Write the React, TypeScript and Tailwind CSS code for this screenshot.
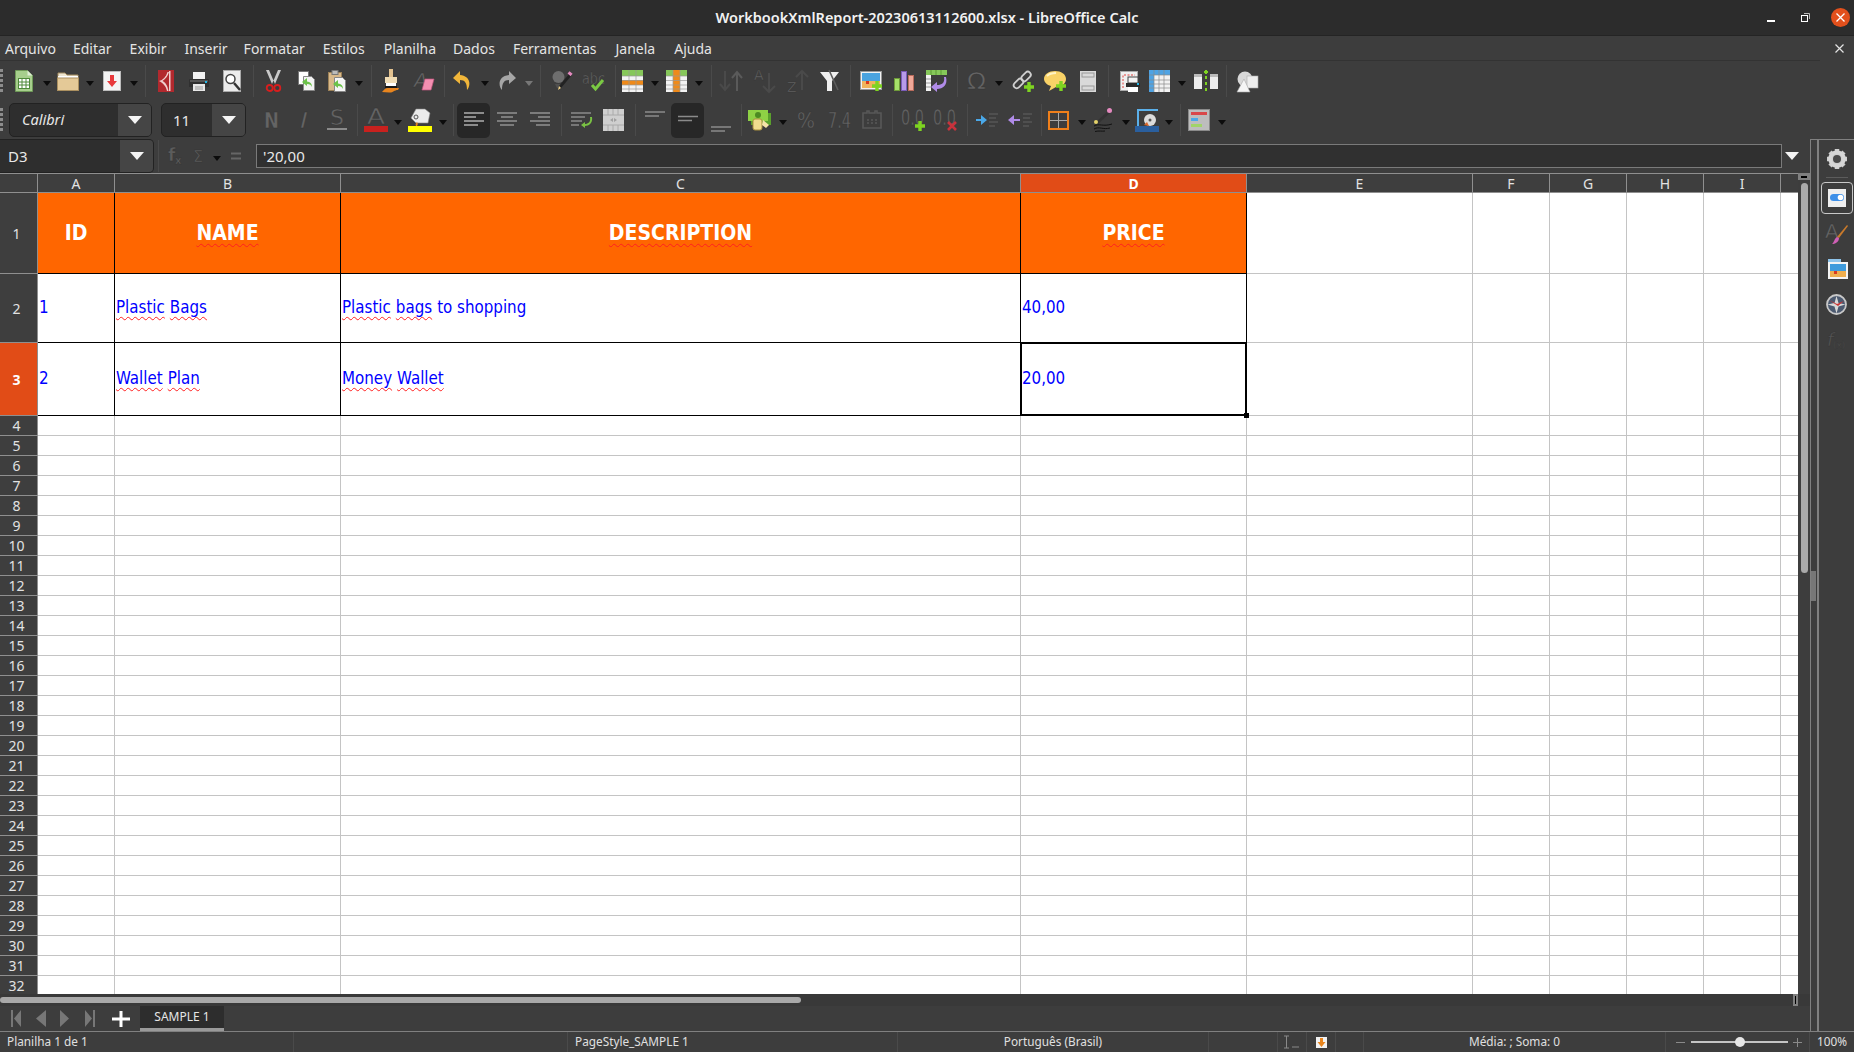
import type { ReactNode } from "react";

type IconProps = { className?: string };

const Svg = ({ w, h, className = "", children }: { w: number; h: number; className?: string; children: ReactNode }) => (
    <svg width={w} height={h} viewBox={`0 0 ${w} ${h}`} className={`shrink-0 overflow-visible ${className}`}>
        {children}
    </svg>
);

const Label = ({ x, y, size, fill = "#646464", weight, style, len, children }: { x: number; y: number; size: number; fill?: string; weight?: string; style?: string; len?: number; children: ReactNode }) => (
    <text
        x={x}
        y={y}
        fontSize={size}
        fill={fill}
        stroke="#333333"
        strokeWidth=".4"
        fontWeight={weight}
        fontStyle={style}
        fontFamily="'DejaVu Sans', sans-serif"
        textLength={len}
        lengthAdjust={len ? "spacingAndGlyphs" : undefined}
    >
        {children}
    </text>
);

const Plus = ({ x, y, s = 10 }: { x: number; y: number; s?: number }) => (
    <path d={`M${x + s / 2} ${y}v${s}M${x} ${y + s / 2}h${s}`} stroke="#7ed321" strokeWidth="3.4" />
);

/* ── small toolbar bits ── */
const Caret = ({ className = "", dim = false }: IconProps & { dim?: boolean }) => (
    <Svg w={8} h={5} className={`mt-1 ${className}`}>
        <path d="M0 0h8L4 5z" fill={dim ? "#777" : "#0c0c0c"} />
    </Svg>
);
const Sep = ({ className = "" }: IconProps) => <div className={`h-8 w-px shrink-0 bg-[#4a4a4a] ${className}`} />;
const Grip = () => (
    <Svg w={3} h={24}>
        {[0, 5, 10, 15, 20].map((y) => (
            <rect key={y} x="0" y={y} width="3" height="3" fill="#8d8d8d" />
        ))}
    </Svg>
);
const WhiteTriangle = () => (
    <Svg w={14} h={8}>
        <path d="M0 0h14L7 8z" fill="#f4f4f4" />
    </Svg>
);

/* ── toolbar 1 ── */
const NewDoc = ({ className }: IconProps) => (
    <Svg w={18} h={22} className={className}>
        <path d="M.5.5h12l5 5v16H.5z" fill="#a7cf8d" stroke="#6f9a58" />
        <path d="M12.5.5v5h5z" fill="#e0eed6" />
        <rect x="3.5" y="8.5" width="11" height="10" fill="#fff" stroke="#4f8a3b" />
        <path d="M3.5 12h11M3.5 15h11M7 8.5v10M11 8.5v10" stroke="#4f8a3b" />
    </Svg>
);
const Folder = ({ className }: IconProps) => (
    <Svg w={22} h={20} className={className}>
        <path d="M1 2h7l2 2h11v4H1z" fill="#efe6d2" stroke="#a68e63" />
        <rect x="1" y="5" width="20" height="2" fill="#fff" />
        <rect x=".5" y="7" width="21" height="12.5" fill="#e4c997" stroke="#ab9060" />
    </Svg>
);
const SaveIcon = ({ className }: IconProps) => (
    <Svg w={18} h={20} className={className}>
        <rect x=".5" y=".5" width="17" height="19" fill="#f4f4f4" stroke="#bdbdbd" />
        <path d="M7 4h4v6h3l-5 6-5-6h3z" fill="#e8393c" />
    </Svg>
);
const PdfIcon = ({ className }: IconProps) => (
    <Svg w={16} h={22} className={className}>
        <rect width="16" height="22" fill="#b2292e" />
        <path d="M11 1v20h1.500V1zM9.500 2C8 7 5 10 1 11c4 2 7 5 8 10h1.500C9.500 15 7 12 4.500 11c3-2 5.500-5 6.500-9z" fill="#f0cfcf" />
    </Svg>
);
const PrintIcon = ({ className }: IconProps) => (
    <Svg w={20} h={20} className={className}>
        <rect x="4" y="1" width="12" height="7" fill="#f2f2f2" />
        <path d="M1 8h18a1 1 0 0 1 1 1v7H0V9a1 1 0 0 1 1-1z" fill="#303030" />
        <rect x="1" y="9" width="18" height="2" fill="#555" />
        <rect x="16" y="10" width="2" height="2" fill="#22b8e8" />
        <rect x="4" y="13" width="12" height="7" fill="#e8e8e8" />
        <path d="M6 16h8M6 18h8" stroke="#999" />
    </Svg>
);
const PreviewIcon = ({ className }: IconProps) => (
    <Svg w={18} h={22} className={className}>
        <rect x=".5" y=".5" width="17" height="21" fill="#ececec" stroke="#aaa" />
        <circle cx="7.500" cy="9" r="4.500" fill="#fff" stroke="#444" strokeWidth="1.500" />
        <path d="M11 13l6 7" stroke="#333" strokeWidth="2.500" />
    </Svg>
);
const CutIcon = ({ className }: IconProps) => (
    <Svg w={15} h={22} className={className}>
        <path d="M0 0l6 14h3L3 0zM15 0L9 14H6l6-14z" fill="#c9c9c9" />
        <circle cx="3.700" cy="18" r="3" fill="none" stroke="#d81e1e" strokeWidth="1.800" />
        <circle cx="11.300" cy="18" r="3" fill="none" stroke="#d81e1e" strokeWidth="1.800" />
    </Svg>
);
const GreenArrow = ({ x, y }: { x: number; y: number }) => (
    <path transform={`translate(${x} ${y})`} d="M5 0L0 4l5 4V6c3 0 4 1 5 3 0-4-2-5-5-5.500z" fill="#6cc24a" />
);
const CopyIcon = ({ className }: IconProps) => (
    <Svg w={17} h={20} className={className}>
        <rect x=".5" y=".5" width="10" height="13" fill="#fff" stroke="#777" />
        <path d="M5.500 5.500h8l3 3v11h-11z" fill="#f3f3f3" stroke="#888" />
        <GreenArrow x={4} y={7} />
    </Svg>
);
const PasteIcon = ({ className }: IconProps) => (
    <Svg w={18} h={22} className={className}>
        <rect x=".5" y="2.500" width="13" height="18" fill="#d9b98a" stroke="#9c8157" />
        <rect x="4" y=".5" width="6" height="4" fill="#bbb" stroke="#777" />
        <path d="M6.500 7.500h8l3 3v11h-11z" fill="#f5f5f5" stroke="#888" />
        <GreenArrow x={5} y={10} />
    </Svg>
);
const BrushIcon = ({ className }: IconProps) => (
    <Svg w={19} h={24} className={className}>
        <rect x="8" y="0" width="4" height="8" fill="#e3c28f" />
        <rect x="4" y="8" width="12" height="6" fill="#f0dcb4" />
        <rect x="5" y="14" width="10" height="3" fill="#fff" />
        <rect x="4" y="17" width="12" height="2" fill="#181818" />
        <path d="M1 23c2-2 3-4 6-4h11l-1 2c-4 0-5 3-9 2.500z" fill="#e8851e" />
    </Svg>
);
const ClearIcon = ({ className }: IconProps) => (
    <Svg w={21} h={20} className={className}>
        <Label x={0} y={16} size={20} style="italic">A</Label>
        <path d="M11 8h9l-3 11H8z" fill="#f48fb1" stroke="#c2557e" strokeWidth=".7" />
    </Svg>
);
const UndoIcon = ({ className }: IconProps) => (
    <Svg w={18} h={20} className={className}>
        <path d="M7 0L0 7l7 6V9c5 0 7 3 7 10 4-4 4-14-7-15z" fill="#f1b63a" />
    </Svg>
);
const RedoIcon = ({ className }: IconProps) => (
    <Svg w={18} h={20} className={className}>
        <path d="M11 0l7 7-7 6V9C6 9 4 12 4 19 0 15 0 5 11 4z" fill="#a6a6a6" />
    </Svg>
);
const SpellIcon = ({ className }: IconProps) => (
    <Svg w={21} h={22} className={className}>
        <circle cx="6.500" cy="7" r="6" fill="#6e6e6e" />
        <path d="M3 14h7l-2 4H5z" fill="#4f4f4f" />
        <path d="M18 3l2 2L9 18l-3 2 1-4z" fill="#222" />
        <rect x="16.500" y="2" width="4" height="3" transform="rotate(40 18 3)" fill="#e58ac0" />
        <path d="M7 16l2 2-3 2z" fill="#f2d58e" />
    </Svg>
);
const AbcIcon = ({ className }: IconProps) => (
    <Svg w={24} h={21} className={className}>
        <Label x={0} y={13} size={16} len={23}>abc</Label>
        <path d="M10 14l3.500 4L21 9" fill="none" stroke="#7ac943" strokeWidth="3" />
    </Svg>
);
const TableCells = ({ top, row, col }: { top: string; row?: boolean; col?: boolean }) => (
    <>
        <rect x="0" y="0" width="21" height="22" fill="#f3f3f3" />
        <rect x="0" y="0" width="21" height="6" fill={top} />
        {row && <rect x="0" y="10" width="21" height="5" fill="#ef8a1a" />}
        {col && <rect x="7" y="0" width="7" height="22" fill="#ef8a1a" />}
        <path d="M0 6h21M0 10.500h21M0 15h21M0 19h21M7 0v22M14 0v22" stroke="#9a9a9a" strokeWidth=".7" />
    </>
);
const TableRowIcon = ({ className }: IconProps) => (
    <Svg w={21} h={22} className={className}>
        <TableCells top="#86c75a" row />
    </Svg>
);
const TableColIcon = ({ className }: IconProps) => (
    <Svg w={21} h={22} className={className}>
        <TableCells top="#86c75a" col />
    </Svg>
);
const SortIcon = ({ className }: IconProps) => (
    <Svg w={24} h={22} className={className}>
        <path d="M6 1v19M1 14l5 6 5-6" fill="none" stroke="#4a4a4a" strokeWidth="2" />
        <path d="M18 21V2M13 8l5-6 5 6" fill="none" stroke="#5a5a5a" strokeWidth="2" />
    </Svg>
);
const SortAzIcon = ({ className }: IconProps) => (
    <Svg w={23} h={24} className={className}>
        <Label x={0} y={11} size={14}>A</Label>
        <path d="M15 4v19M9 17l6 6 6-6" fill="none" stroke="#4a4a4a" strokeWidth="2" />
    </Svg>
);
const SortZaIcon = ({ className }: IconProps) => (
    <Svg w={22} h={24} className={className}>
        <Label x={0} y={23} size={14}>Z</Label>
        <path d="M15 21V2M9 8l6-6 6 6" fill="none" stroke="#4a4a4a" strokeWidth="2" />
    </Svg>
);
const FilterIcon = ({ className }: IconProps) => (
    <Svg w={19} h={22} className={className}>
        <path d="M0 2h19l-7 9v10H7V11z" fill="#f0f0f0" />
        <path d="M9 0l9 20" stroke="#5c5c5c" strokeWidth="1.600" />
    </Svg>
);
const ImageIcon = ({ className }: IconProps) => (
    <Svg w={22} h={20} className={className}>
        <rect x=".5" y=".5" width="21" height="18" fill="#f2f2f2" stroke="#999" />
        <rect x="2" y="2" width="18" height="8" fill="#4aa3df" />
        <rect x="2" y="10" width="18" height="7" fill="#f0b45c" />
        <rect x="6" y="10" width="3" height="3" fill="#d9381e" />
        <Plus x={12} y={10} />
    </Svg>
);
const ChartIcon = ({ className }: IconProps) => (
    <Svg w={20} h={20} className={className}>
        <rect x=".5" y="7.500" width="5" height="12" fill="#a6e06a" stroke="#6f9a3a" />
        <rect x="7.500" y=".5" width="5" height="19" fill="#b79ae8" stroke="#7a5cb8" />
        <rect x="14.500" y="4.500" width="5" height="15" fill="#f0a898" stroke="#b86b5c" />
    </Svg>
);
const PivotIcon = ({ className }: IconProps) => (
    <Svg w={21} h={22} className={className}>
        <rect x="0" y="0" width="21" height="5" fill="#86c75a" />
        <path d="M5 0v5M10 0v5M15 0v5" stroke="#5c9a35" />
        <rect x="0" y="5" width="5" height="16" fill="#f3f3f3" />
        <path d="M0 9h5M0 13h5M0 17h5" stroke="#999" />
        <path d="M18 7c1 6-2 8-7 8v-3l-6 5 6 5v-3c6 0 11-4 9-12z" fill="#b08be8" />
    </Svg>
);
const OmegaIcon = ({ className }: IconProps) => (
    <Svg w={19} h={22} className={className}>
        <Label x={0} y={19} size={23} len={19}>Ω</Label>
    </Svg>
);
const LinkIcon = ({ className }: IconProps) => (
    <Svg w={22} h={21} className={className}>
        <rect x="1" y="9.500" width="11" height="6" rx="3" transform="rotate(-45 6.500 12.500)" fill="none" stroke="#cfcfcf" strokeWidth="1.800" />
        <rect x="8.500" y="2.500" width="11" height="6" rx="3" transform="rotate(-45 14 5.500)" fill="none" stroke="#cfcfcf" strokeWidth="1.800" />
        <Plus x={12} y={11} />
    </Svg>
);
const CommentIcon = ({ className }: IconProps) => (
    <Svg w={23} h={21} className={className}>
        <path d="M11 0c6 0 11 3 11 8s-5 8-10 8l-7 4 2-5C3 14 0 11 0 8c0-5 5-8 11-8z" fill="#f9d267" />
        <path d="M3 5c2-2 6-3 9-3" stroke="#fff3c4" strokeWidth="2" fill="none" />
        <Plus x={12} y={10} />
    </Svg>
);
const HeaderIcon = ({ className }: IconProps) => (
    <Svg w={16} h={21} className={className}>
        <rect width="16" height="21" fill="#d9d9d9" />
        <rect x="2" y="2" width="12" height="4" fill="#d9d9d9" stroke="#9a9a9a" />
        <rect x="2" y="15" width="12" height="4" fill="#d9d9d9" stroke="#9a9a9a" />
    </Svg>
);
const PrintRangeIcon = ({ className }: IconProps) => (
    <Svg w={20} h={21} className={className}>
        <rect x=".5" y=".5" width="17" height="19" fill="#efefef" stroke="#aaa" />
        <path d="M3 17V4h12" fill="none" stroke="#e0413c" strokeDasharray="2 1.500" />
        <rect x="8" y="6" width="10" height="6" fill="#f4f4f4" stroke="#444" />
        <rect x="6" y="12" width="14" height="4" fill="#2b2b2b" />
        <rect x="17" y="12" width="2" height="2" fill="#22b8e8" />
        <rect x="8" y="16" width="10" height="5" fill="#fff" />
    </Svg>
);
const GridIcon = ({ className }: IconProps) => (
    <Svg w={21} h={22} className={className}>
        <rect width="21" height="22" fill="#f2f2f2" />
        <rect width="21" height="5" fill="#4ea3e4" />
        <rect width="5" height="22" fill="#4ea3e4" />
        <path d="M0 5h21M0 10h21M0 14h21M0 18h21M5 0v22M10 0v22M15 0v22" stroke="#8a8a8a" strokeWidth=".7" />
    </Svg>
);
const FreezeIcon = ({ className }: IconProps) => (
    <Svg w={24} h={22} className={className}>
        <rect x="0" y="4" width="8" height="15" fill="#ededed" />
        <rect x="0" y="4" width="8" height="3" fill="#bbb" />
        <rect x="16" y="4" width="8" height="15" fill="#ededed" />
        <rect x="16" y="4" width="8" height="3" fill="#bbb" />
        <path d="M12 0v4M10 2h4" stroke="#7ed321" strokeWidth="2" />
        <path d="M12 6v16" stroke="#7ed321" strokeWidth="2" strokeDasharray="3 3" />
    </Svg>
);
const ShapesIcon = ({ className }: IconProps) => (
    <Svg w={21} h={21} className={className}>
        <circle cx="8" cy="8" r="7.500" fill="#d8d8d8" />
        <rect x="10" y="5" width="11" height="12" fill="#ededed" stroke="#aaa" strokeWidth=".6" />
        <path d="M7 8l6 13H0z" fill="#f5f5f5" stroke="#aaa" strokeWidth=".6" />
    </Svg>
);

/* ── toolbar 2 ── */
const BoldN = ({ className }: IconProps) => (
    <Svg w={15} h={18} className={className}>
        <Label x={0} y={17} size={22} weight="bold" len={15}>N</Label>
    </Svg>
);
const ItalicI = ({ className }: IconProps) => (
    <Svg w={8} h={18} className={className}>
        <Label x={0} y={17} size={22} style="italic" len={8}>I</Label>
    </Svg>
);
const UnderS = ({ className }: IconProps) => (
    <Svg w={20} h={24} className={className}>
        <Label x={3} y={17} size={21} len={14}>S</Label>
        <rect x="0" y="20" width="20" height="2" fill="#8a8a8a" />
    </Svg>
);
const FontColor = ({ className }: IconProps) => (
    <Svg w={24} h={24} className={className}>
        <Label x={3} y={16} size={21} len={18}>A</Label>
        <rect x="0" y="18" width="24" height="6" fill="#c9211e" />
    </Svg>
);
const FillColor = ({ className }: IconProps) => (
    <Svg w={24} h={24} className={className}>
        <path d="M8 1h9l5 4-2 10H8l-5-5z" fill="#ececec" stroke="#888" strokeWidth=".6" />
        <circle cx="8" cy="9" r="2" fill="none" stroke="#555" />
        <path d="M8 18c-1-2 0-3 1-4 1 1 1 3 0 4z" fill="#e8851e" />
        <rect x="0" y="18" width="24" height="6" fill="#ffff00" />
    </Svg>
);
const Lines = ({ w, rows, color = "#7c7c7c" }: { w: number; rows: [number, number, number][]; color?: string }) => (
    <Svg w={w} h={16}>
        {rows.map(([x, y, len], i) => (
            <rect key={i} x={x} y={y} width={len} height="2" fill={color} />
        ))}
    </Svg>
);
const AlignLeft = () => <Lines w={20} color="#8c8c8c" rows={[[0, 0, 20], [0, 4, 12], [0, 8, 20], [0, 12, 14]]} />;
const AlignCenter = () => <Lines w={20} rows={[[0, 0, 20], [4, 4, 12], [0, 8, 20], [3, 12, 14]]} />;
const AlignRight = () => <Lines w={20} rows={[[0, 0, 20], [8, 4, 12], [0, 8, 20], [6, 12, 14]]} />;
const WrapIcon = ({ className }: IconProps) => (
    <Svg w={21} h={16} className={className}>
        <path d="M0 1h20M0 5h14M0 9h11M0 13h8" stroke="#777" strokeWidth="2" />
        <path d="M19 5c1 5-2 7-5 7v-2l-4 3 4 3v-2c4 0 8-3 7-9z" fill="#79c143" />
    </Svg>
);
const MergeIcon = ({ className }: IconProps) => (
    <Svg w={21} h={22} className={className}>
        <rect width="21" height="22" fill="#cfcfcf" />
        <path d="M0 6h21M0 16h21M5 0v6M10 0v6M15 0v6M5 16v6M10 16v6M15 16v6" stroke="#aaa" />
        <path d="M10 9l-3 2 3 2zM11 9l3 2-3 2z" fill="#a0a0a0" />
    </Svg>
);
const VTop = () => (
    <Svg w={20} h={20}>
        <path d="M0 1h20M0 5h14" stroke="#8a8a8a" strokeWidth="1.600" />
    </Svg>
);
const VMid = () => (
    <Svg w={20} h={10}>
        <path d="M0 1.500h20M0 5.500h14" stroke="#8a8a8a" strokeWidth="1.600" />
    </Svg>
);
const VBottom = () => (
    <Svg w={20} h={20}>
        <path d="M0 13h20M0 17h14" stroke="#8a8a8a" strokeWidth="1.600" />
    </Svg>
);
const CurrencyIcon = ({ className }: IconProps) => (
    <Svg w={23} h={21} className={className}>
        <rect x="3" y="3" width="20" height="12" fill="#5aa02c" />
        <rect x="0" y="0" width="20" height="11" fill="#8ed145" />
        <circle cx="10" cy="5" r="3" fill="#4c8a22" />
        <rect x="5" y="9" width="9" height="11" rx="2" fill="#f0dc8e" stroke="#a98f3f" />
        <path d="M15 10l6 5-3 3-4-3z" fill="#f5e3a8" />
    </Svg>
);
const PercentIcon = ({ className }: IconProps) => (
    <Svg w={18} h={18} className={className}>
        <Label x={0} y={17} size={21} len={18}>%</Label>
    </Svg>
);
const NumberIcon = ({ className }: IconProps) => (
    <Svg w={23} h={18} className={className}>
        <Label x={0} y={17} size={21} len={23}>7.4</Label>
    </Svg>
);
const DateIcon = ({ className }: IconProps) => (
    <Svg w={20} h={18} className={className}>
        <path d="M1 2h4V0h2v2h6V0h2v2h4v15H1z" fill="none" stroke="#585858" strokeWidth="1.600" />
        <path d="M5 9h2M9 9h2M13 9h2M5 12h2M9 12h2M13 12h2" stroke="#585858" strokeWidth="1.500" />
    </Svg>
);
const AddDecimal = ({ className }: IconProps) => (
    <Svg w={24} h={22} className={className}>
        <Label x={0} y={16} size={21} len={23}>0.0</Label>
        <Plus x={14} y={12} />
    </Svg>
);
const RemoveDecimal = ({ className }: IconProps) => (
    <Svg w={24} h={22} className={className}>
        <Label x={0} y={16} size={21} len={23}>0.0</Label>
        <path d="M15 13l8 8M23 13l-8 8" stroke="#c8323c" strokeWidth="2.600" />
    </Svg>
);
const IndentIcon = ({ className }: IconProps) => (
    <Svg w={22} h={16} className={className}>
        <path d="M0 7h5V3l6 5-6 5V9H0z" fill="#4aa8e8" />
        <path d="M13 2h9M13 6h7M13 10h9M13 14h6" stroke="#555" strokeWidth="1.600" />
    </Svg>
);
const OutdentIcon = ({ className }: IconProps) => (
    <Svg w={24} h={16} className={className}>
        <path d="M12 7H6V3L0 8l6 5V9h6z" fill="#b08be8" />
        <path d="M15 2h9M15 6h7M15 10h9M15 14h6" stroke="#555" strokeWidth="1.600" />
    </Svg>
);
const BordersIcon = ({ className }: IconProps) => (
    <Svg w={21} h={19} className={className}>
        <rect x="1" y="1" width="19" height="17" fill="none" stroke="#ef7f1a" strokeWidth="2" />
        <path d="M10.500 2v15M2 9.500h17" stroke="#a8a8a8" />
    </Svg>
);
const LineStyleIcon = ({ className }: IconProps) => (
    <Svg w={18} h={24} className={className}>
        <path d="M15 2l2 2L4 16l-3 1 1-3z" fill="#333" />
        <circle cx="15.500" cy="2.500" r="2.500" fill="#e58ac0" />
        <circle cx="2" cy="14" r="2" fill="#e6d36a" />
        <path d="M0 18c5-3 9 1 18-2M0 21c5-3 9 1 16-1M1 23.500c4-1 7 0 10-.5" fill="none" stroke="#111" />
    </Svg>
);
const AreaIcon = ({ className }: IconProps) => (
    <Svg w={24} h={24} className={className}>
        <path d="M3 18V2h20" fill="none" stroke="#5bb0ea" strokeWidth="2" />
        <circle cx="15" cy="12" r="6" fill="#dcdcdc" />
        <circle cx="15" cy="12" r="1.500" fill="#555" />
        <path d="M9 17l3-3 2 4z" fill="#d9662b" />
        <rect x="0" y="18" width="24" height="6" fill="#2a5f9e" />
    </Svg>
);
const StylesIcon = ({ className }: IconProps) => (
    <Svg w={22} h={22} className={className}>
        <rect x=".5" y=".5" width="21" height="21" fill="#bdbdbd" stroke="#8a8a8a" />
        <rect x="3" y="3" width="16" height="3" fill="#d9484a" />
        <rect x="3" y="9" width="7" height="3" fill="#4aa8e8" />
        <rect x="3" y="15" width="11" height="3" fill="#a0d468" />
    </Svg>
);

/* ── sidebar ── */
const GearIcon = () => (
    <Svg w={22} h={22}>
        <path d="M11 1v20M1 11h20M4 4l14 14M18 4L4 18" stroke="#cfcfcf" strokeWidth="4.500" />
        <circle cx="11" cy="11" r="7" fill="none" stroke="#d6d6d6" strokeWidth="3.500" />
        <circle cx="11" cy="11" r="4" fill="#4a4a4a" />
    </Svg>
);
const PropertiesIcon = () => (
    <Svg w={18} h={18}>
        <rect width="18" height="18" fill="#efefef" />
        <rect x="2" y="5" width="14" height="7" rx="3.500" fill="#3d8fe8" />
        <circle cx="12.500" cy="8.500" r="2.800" fill="#fff" />
    </Svg>
);
const AStyleIcon = () => (
    <Svg w={23} h={24}>
        <Label x={0} y={17} size={20}>A</Label>
        <path d="M22 4l1 1-9 12-2-1z" fill="#c97a2b" />
        <path d="M12 16l2 1c0 4-4 6-7 6 2-1 2-5 5-7z" fill="#cf5fb5" />
    </Svg>
);
const GalleryIcon = () => (
    <Svg w={22} h={20}>
        <rect x="2" y="0" width="13" height="6" fill="#8fc4ea" />
        <rect x="2" y="3" width="20" height="17" fill="#f4f4f4" />
        <rect x="4" y="5" width="16" height="7" fill="#3f9bdc" />
        <rect x="4" y="12" width="16" height="6" fill="#efae4e" />
        <rect x="8" y="12" width="3" height="3" fill="#d9381e" />
    </Svg>
);
const NavigatorIcon = () => (
    <Svg w={21} h={21}>
        <circle cx="10.500" cy="10.500" r="9.500" fill="#4c5a70" stroke="#c8c8c8" strokeWidth="1.800" />
        <path d="M10.500 2l2 7 7 1.500-7 2-2 7-2-7-7-2 7-1.500z" fill="#d8d8d8" />
        <path d="M3 6l8 4 7-3-6 5z" fill="#cc3333" />
    </Svg>
);
const FunctionIcon = () => (
    <Svg w={19} h={18}>
        <Label x={0} y={15} size={18} style="italic" fill="#555">f</Label>
        <Label x={6} y={17} size={9} fill="#555">(x)</Label>
    </Svg>
);

const menuItems: [string, string][] = [
    ["Arquivo", "ml-[5px]"],
    ["Editar", "ml-[17px]"],
    ["Exibir", "ml-[18px]"],
    ["Inserir", "ml-[18px]"],
    ["Formatar", "ml-[16px]"],
    ["Estilos", "ml-[18px]"],
    ["Planilha", "ml-[19px]"],
    ["Dados", "ml-[17px]"],
    ["Ferramentas", "ml-[18px]"],
    ["Janela", "ml-[19px]"],
    ["Ajuda", "ml-[19px]"],
];

const gridCols = "grid grid-cols-[38px_77px_226px_680px_226px_226px_77px_77px_77px_77px_1fr]";
const letters = ["A", "B", "C", "D", "E", "F", "G", "H", "I", ""];
const blankLine = "border-r border-b border-[#c4c4c4] bg-white";
const dataFont = "font-['DejaVu_Sans_Condensed','DejaVu_Sans',sans-serif] text-[16.800px] text-[#0000ff]";

const Wavy = ({ children }: { children: ReactNode }) => (
    <span className="underline decoration-[#ff2020] decoration-wavy decoration-1 underline-offset-[3px]">{children}</span>
);

const RowHead = ({ n, h, active = false }: { n: number; h: string; active?: boolean }) => (
    <div className={`flex items-center justify-center border-r border-b border-[#8f8f8f] pr-1 text-[14px] ${h} ${active ? "bg-[#e14c17] font-bold text-white" : "bg-[#3e3e3e] text-[#e2e2e2]"}`}>
        {n}
    </div>
);

const HeadCell = ({ children }: { children: ReactNode }) => (
    <div className="flex items-center justify-center border-r border-b border-black bg-[#ff6600] font-['DejaVu_Sans_Condensed','DejaVu_Sans',sans-serif] text-[21px] leading-none font-bold text-white">
        {children}
    </div>
);

const DataCell = ({ children }: { children: ReactNode }) => (
    <div className={`flex items-center gap-[5px] border-r border-b border-black bg-white pl-[1px] ${dataFont}`}>{children}</div>
);

const Blanks = ({ h, n = 6 }: { h: string; n?: number }) => (
    <>
        {Array.from({ length: n }, (_, i) => (
            <div key={i} className={`${blankLine} ${h} ${i === n - 1 ? "border-r-0" : ""}`} />
        ))}
    </>
);

export default function App() {
    const rows = Array.from({ length: 29 }, (_, i) => i + 4);

    return (
        <div className="flex h-[1052px] w-[1854px] flex-col overflow-hidden bg-[#3d3d3d] font-['Noto_Sans',sans-serif] text-[#e6e6e6]">
            {/* TITLE BAR */}
            <div className="flex h-9 shrink-0 items-center bg-[#2c2c2c] border-b border-[#242424]">
                <span className="ml-[715px] w-[424px] text-center text-[14.500px] font-semibold whitespace-nowrap text-[#f2f2f2]">
                    WorkbookXmlReport-20230613112600.xlsx - LibreOffice Calc
                </span>
                <div className="ml-[628px] h-[2px] w-2 translate-y-[3px] bg-white" />
                <Svg w={9} h={9} className="ml-[26px]">
                    <rect x=".5" y="2.500" width="6" height="6" fill="none" stroke="#fff" />
                    <path d="M3 .5h5.500V6" fill="none" stroke="#bbb" />
                </Svg>
                <div className="ml-[21px] flex size-[19px] items-center justify-center rounded-full bg-[#e2501c]">
                    <Svg w={9} h={9}>
                        <path d="M.5.5l8 8M8.500.5l-8 8" stroke="#fff" strokeWidth="1.300" />
                    </Svg>
                </div>
            </div>

            {/* MENU BAR */}
            <div className="flex h-[25px] shrink-0 items-center text-[14px] text-[#e4e4e4]">
                <div className="flex h-full w-[1820px] items-center border-b border-[#333]">
                    {menuItems.map(([label, gap]) => (
                        <span key={label} className={gap}>
                            {label}
                        </span>
                    ))}
                </div>
                <Svg w={9} h={9} className="ml-[15px]">
                    <path d="M.5.5l8 8M8.500.5l-8 8" stroke="#e4e4e4" strokeWidth="1.200" />
                </Svg>
            </div>

            {/* TOOLBAR 1 */}
            <div className="flex h-10 shrink-0 items-center">
                <Grip />
                <NewDoc className="ml-[12px]" />
                <Caret className="ml-[10px]" />
                <Folder className="ml-[6px]" />
                <Caret className="ml-[7px]" />
                <SaveIcon className="ml-[9px]" />
                <Caret className="ml-[9px]" />
                <Sep className="ml-[7px]" />
                <PdfIcon className="ml-[12px]" />
                <PrintIcon className="ml-[15px]" />
                <PreviewIcon className="ml-[14px]" />
                <Sep className="ml-[12px]" />
                <CutIcon className="ml-[12px]" />
                <CopyIcon className="ml-[17px]" />
                <PasteIcon className="ml-[13px]" />
                <Caret className="ml-[9px]" />
                <Sep className="ml-[8px]" />
                <BrushIcon className="ml-[9px]" />
                <ClearIcon className="ml-[14px]" />
                <Sep className="ml-[9px]" />
                <UndoIcon className="ml-[8px]" />
                <Caret className="ml-[10px]" />
                <RedoIcon className="ml-[9px]" />
                <Caret dim className="ml-[9px]" />
                <Sep className="ml-[7px]" />
                <SpellIcon className="ml-[11px]" />
                <AbcIcon className="ml-[9px]" />
                <Sep className="ml-[9px]" />
                <TableRowIcon className="ml-[6px]" />
                <Caret className="ml-[8px]" />
                <TableColIcon className="ml-[7px]" />
                <Caret className="ml-[8px]" />
                <Sep className="ml-[8px]" />
                <SortIcon className="ml-[7px]" />
                <SortAzIcon className="ml-[11px]" />
                <SortZaIcon className="ml-[10px]" />
                <FilterIcon className="ml-[11px]" />
                <Sep className="ml-[11px]" />
                <ImageIcon className="ml-[9px]" />
                <ChartIcon className="ml-[12px]" />
                <PivotIcon className="ml-[12px]" />
                <Sep className="ml-[10px]" />
                <OmegaIcon className="ml-[9px]" />
                <Caret className="ml-[9px]" />
                <LinkIcon className="ml-[9px]" />
                <CommentIcon className="ml-[10px]" />
                <HeaderIcon className="ml-[13px]" />
                <Sep className="ml-[12px]" />
                <PrintRangeIcon className="ml-[11px]" />
                <GridIcon className="ml-[9px]" />
                <Caret className="ml-[8px]" />
                <FreezeIcon className="ml-[8px]" />
                <Sep className="ml-[8px]" />
                <ShapesIcon className="ml-[10px]" />
            </div>

            {/* TOOLBAR 2 */}
            <div className="flex h-[38px] shrink-0 items-center">
                <Grip />
                <div className="ml-[6px] flex h-[34px] w-[143px] shrink-0 overflow-hidden rounded-[5px] border border-[#222] bg-[#2e2e2e]">
                    <span className="flex flex-1 items-center pl-3 text-[14.500px] text-[#e8e8e8] italic">Calibri</span>
                    <div className="flex w-[33px] items-center justify-center bg-[#454545]">
                        <WhiteTriangle />
                    </div>
                </div>
                <div className="ml-[9px] flex h-[34px] w-[85px] shrink-0 overflow-hidden rounded-[5px] border border-[#222] bg-[#2e2e2e]">
                    <span className="flex flex-1 items-center pl-[11px] text-[15px] text-[#e8e8e8]">11</span>
                    <div className="flex w-[33px] items-center justify-center bg-[#454545]">
                        <WhiteTriangle />
                    </div>
                </div>
                <BoldN className="ml-[18px]" />
                <ItalicI className="ml-[21px]" />
                <UnderS className="ml-[19px]" />
                <Sep className="ml-[10px]" />
                <FontColor className="ml-[6px]" />
                <Caret className="ml-[6px]" />
                <FillColor className="ml-[6px]" />
                <Caret className="ml-[7px]" />
                <Sep className="ml-[6px]" />
                <div className="ml-[3px] flex h-[35px] w-[33px] shrink-0 items-center justify-center rounded-[5px] bg-[#272727]">
                    <AlignLeft />
                </div>
                <div className="ml-[7px]">
                    <AlignCenter />
                </div>
                <div className="ml-[13px]">
                    <AlignRight />
                </div>
                <Sep className="ml-[11px]" />
                <WrapIcon className="ml-[9px]" />
                <MergeIcon className="ml-[11px]" />
                <Sep className="ml-[11px]" />
                <div className="ml-[9px] flex h-[35px] items-start pt-[8px]">
                    <VTop />
                </div>
                <div className="ml-[6px] flex h-[35px] w-[33px] shrink-0 items-center justify-center rounded-[5px] bg-[#272727]">
                    <VMid />
                </div>
                <div className="ml-[7px] flex h-[35px] items-end pb-[4px]">
                    <VBottom />
                </div>
                <Sep className="ml-[10px]" />
                <CurrencyIcon className="ml-[6px]" />
                <Caret className="ml-[8px]" />
                <PercentIcon className="ml-[10px]" />
                <NumberIcon className="ml-[13px]" />
                <DateIcon className="ml-[11px]" />
                <Sep className="ml-[10px]" />
                <AddDecimal className="ml-[8px]" />
                <RemoveDecimal className="ml-[8px]" />
                <Sep className="ml-[10px]" />
                <IndentIcon className="ml-[8px]" />
                <OutdentIcon className="ml-[10px]" />
                <Sep className="ml-[9px]" />
                <BordersIcon className="ml-[6px]" />
                <Caret className="ml-[9px]" />
                <LineStyleIcon className="ml-[8px]" />
                <Caret className="ml-[10px]" />
                <AreaIcon className="ml-[5px]" />
                <Caret className="ml-[6px]" />
                <Sep className="ml-[7px]" />
                <StylesIcon className="ml-[7px]" />
                <Caret className="ml-[8px]" />
            </div>

            {/* WORK AREA */}
            <div className="flex min-h-0 flex-1">
                <div className="flex w-[1810px] shrink-0 flex-col">
                    {/* FORMULA BAR */}
                    <div className="flex h-[34px] shrink-0 items-center">
                        <div className="flex h-full w-[154px] shrink-0 overflow-hidden rounded-r-[5px] border-y border-r border-[#222] bg-[#2e2e2e]">
                            <span className="flex flex-1 items-center pl-2 text-[15px] text-[#e8e8e8]">D3</span>
                            <div className="flex w-[33px] items-center justify-center bg-[#454545]">
                                <WhiteTriangle />
                            </div>
                        </div>
                        <Sep className="ml-[4px] h-6" />
                        <Svg w={16} h={18} className="ml-[9px]">
                            <Label x={0} y={14} size={17} weight="bold" fill="#5c5c5c">f</Label>
                            <Label x={7} y={17} size={10} weight="bold" fill="#5c5c5c">x</Label>
                        </Svg>
                        <Svg w={11} h={18} className="ml-[9px]">
                            <Label x={0} y={15} size={16} fill="#5c5c5c">Σ</Label>
                        </Svg>
                        <Caret className="ml-[9px]" />
                        <Svg w={10} h={8} className="ml-[10px]">
                            <path d="M0 1.500h10M0 6.500h10" stroke="#666" strokeWidth="2" />
                        </Svg>
                        <div className="ml-[15px] flex h-6 w-[1526px] shrink-0 items-center border border-[#7a7a7a] bg-[#303030] pl-[6px] text-[15px] text-[#e8e8e8]">
                            '20,00
                        </div>
                        <div className="ml-[3px]">
                            <WhiteTriangle />
                        </div>
                    </div>

                    {/* SHEET + VERTICAL SCROLLBAR */}
                    <div className="flex h-[821px] shrink-0">
                        <div className={`${gridCols} h-full w-[1798px] shrink-0 content-start overflow-hidden`}>
                            <div className="h-5 border-t border-r border-b border-[#8f8f8f] bg-[#3e3e3e]" />
                            {letters.map((l) => (
                                <div
                                    key={l || "J"}
                                    className={`flex h-5 items-center justify-center border-t border-r border-b border-[#8f8f8f] text-[14px] ${l === "D" ? "bg-[#e14c17] font-bold text-white" : "bg-[#3e3e3e] text-[#e2e2e2]"} ${l === "" ? "border-r-0" : ""}`}
                                >
                                    {l}
                                </div>
                            ))}

                            <RowHead n={1} h="h-[81px]" />
                            <HeadCell>ID</HeadCell>
                            <HeadCell><Wavy>NAME</Wavy></HeadCell>
                            <HeadCell><Wavy>DESCRIPTION</Wavy></HeadCell>
                            <HeadCell><Wavy>PRICE</Wavy></HeadCell>
                            <Blanks h="h-[81px]" />

                            <RowHead n={2} h="h-[69px]" />
                            <DataCell>1</DataCell>
                            <DataCell><Wavy>Plastic</Wavy><Wavy>Bags</Wavy></DataCell>
                            <DataCell><Wavy>Plastic</Wavy><Wavy>bags</Wavy><span>to shopping</span></DataCell>
                            <DataCell>40,00</DataCell>
                            <Blanks h="h-[69px]" />

                            <RowHead n={3} h="h-[73px]" active />
                            <DataCell>2</DataCell>
                            <DataCell><Wavy>Wallet</Wavy><Wavy>Plan</Wavy></DataCell>
                            <DataCell><Wavy>Money</Wavy><Wavy>Wallet</Wavy></DataCell>
                            <div className={`relative flex items-center border-r border-b border-black bg-white pl-[1px] ${dataFont}`}>
                                20,00
                                <div className="absolute -top-px -left-px -right-px -bottom-px border-2 border-black" />
                                <div className="absolute -right-[3px] -bottom-[3px] size-[5px] bg-black" />
                            </div>
                            <Blanks h="h-[73px]" />

                            {rows.map((n) => (
                                <div key={n} className="contents">
                                    <RowHead n={n} h="h-5" />
                                    <Blanks h="h-5" n={10} />
                                </div>
                            ))}
                        </div>
                        <div className="flex w-3 shrink-0 flex-col items-center">
                            <div className="flex h-[7px] w-full items-center justify-center bg-[#808080]">
                                <div className="h-[2px] w-[6px] bg-black" />
                            </div>
                            <div className="mt-[3px] h-[390px] w-[7px] rounded-full bg-[#a9a9a9]" />
                        </div>
                    </div>

                    {/* HORIZONTAL SCROLLBAR */}
                    <div className="flex h-3 shrink-0 items-center bg-[#393939]">
                        <div className="h-[6px] w-[801px] rounded-full bg-[#a9a9a9]" />
                        <div className="ml-[992px] flex h-full w-[5px] items-center justify-center bg-[#808080]">
                            <div className="h-2 w-px bg-black" />
                        </div>
                    </div>

                    {/* SHEET TABS */}
                    <div className="flex h-[25px] shrink-0 items-center">
                        <Svg w={10} h={17} className="ml-[11px]">
                            <path d="M0 0h2v17H0zM10 0v17L3 8.500z" fill="#777" />
                        </Svg>
                        <Svg w={10} h={17} className="ml-[15px]">
                            <path d="M10 0v17L0 8.500z" fill="#777" />
                        </Svg>
                        <Svg w={9} h={17} className="ml-[14px]">
                            <path d="M0 0v17l9-8.500z" fill="#777" />
                        </Svg>
                        <Svg w={10} h={17} className="ml-[16px]">
                            <path d="M8 0h2v17H8zM0 0v17l7-8.500z" fill="#777" />
                        </Svg>
                        <Svg w={18} h={16} className="ml-[17px]">
                            <path d="M9 0v16M0 8h18" stroke="#fff" strokeWidth="3" />
                        </Svg>
                        <div className="ml-[10px] flex h-full w-[84px] items-center justify-center border-b-[3px] border-[#9a9a9a] bg-[#2d2d2d] text-[12px] text-[#e6e6e6]">
                            SAMPLE 1
                        </div>
                    </div>
                </div>

                {/* SIDEBAR */}
                <div className="flex min-w-0 flex-1 border-t border-[#808080]">
                    <div className="flex w-2 shrink-0 flex-col items-start justify-center border-x border-[#808080]">
                        <div className="h-[30px] w-[5px] bg-[#777]" />
                    </div>
                    <div className="flex flex-1 flex-col items-center border-l border-[#808080]">
                        <div className="mt-[8px]">
                            <GearIcon />
                        </div>
                        <div className="mt-[7px] h-px w-[22px] bg-[#5c5c5c]" />
                        <div className="mt-[4px] flex h-8 w-8 items-center justify-center rounded-[4px] border border-[#c8c8c8]">
                            <PropertiesIcon />
                        </div>
                        <div className="mt-[7px]">
                            <AStyleIcon />
                        </div>
                        <div className="mt-[14px]">
                            <GalleryIcon />
                        </div>
                        <div className="mt-[15px]">
                            <NavigatorIcon />
                        </div>
                        <div className="mt-[16px]">
                            <FunctionIcon />
                        </div>
                    </div>
                </div>
            </div>

            {/* STATUS BAR */}
            <div className="flex h-[21px] shrink-0 items-center border-t border-[#808080] text-[11.800px] text-[#e0e0e0]">
                <div className="flex h-full w-[293px] items-center pl-[7px]">Planilha 1 de 1</div>
                <div className="h-full w-[274px] border-l border-[#4a4a4a]" />
                <div className="flex h-full w-[330px] items-center border-l border-[#4a4a4a] pl-[7px]">PageStyle_SAMPLE 1</div>
                <div className="flex h-full w-[311px] items-center justify-center border-l border-[#4a4a4a]">Português (Brasil)</div>
                <div className="h-full w-[69px] border-l border-[#4a4a4a]" />
                <div className="flex h-full w-[29px] items-center border-l border-[#4a4a4a] pl-[5px]">
                    <Svg w={16} h={12}>
                        <path d="M1 0h5M3.500 0v12M1 12h5M9 11h7" stroke="#8a8a8a" />
                    </Svg>
                </div>
                <div className="flex h-full w-[29px] items-center justify-center border-l border-[#4a4a4a]">
                    <Svg w={11} h={11}>
                        <rect width="11" height="11" fill="#f2f2f2" />
                        <path d="M4 1h3v4h2.500L5.500 10 1.500 5H4z" fill="#e8851e" />
                    </Svg>
                </div>
                <div className="h-full w-[28px] border-l border-[#4a4a4a]" />
                <div className="flex h-full w-[302px] items-center justify-center border-l border-[#4a4a4a]">Média: ; Soma: 0</div>
                <div className="flex h-full w-[144px] items-center border-l border-[#4a4a4a]">
                    <div className="ml-[10px] h-px w-[9px] bg-[#8a8a8a]" />
                    <div className="relative ml-[6px] h-[2px] w-[97px] bg-[#c4c4c4]">
                        <div className="absolute -top-[4px] left-[44px] size-[10px] rounded-full bg-[#e6e6e6]" />
                    </div>
                    <Svg w={9} h={9} className="ml-[5px]">
                        <path d="M4.500 0v9M0 4.500h9" stroke="#8a8a8a" />
                    </Svg>
                </div>
                <div className="flex h-full flex-1 items-center justify-center border-l border-[#4a4a4a]">100%</div>
            </div>
        </div>
    );
}
